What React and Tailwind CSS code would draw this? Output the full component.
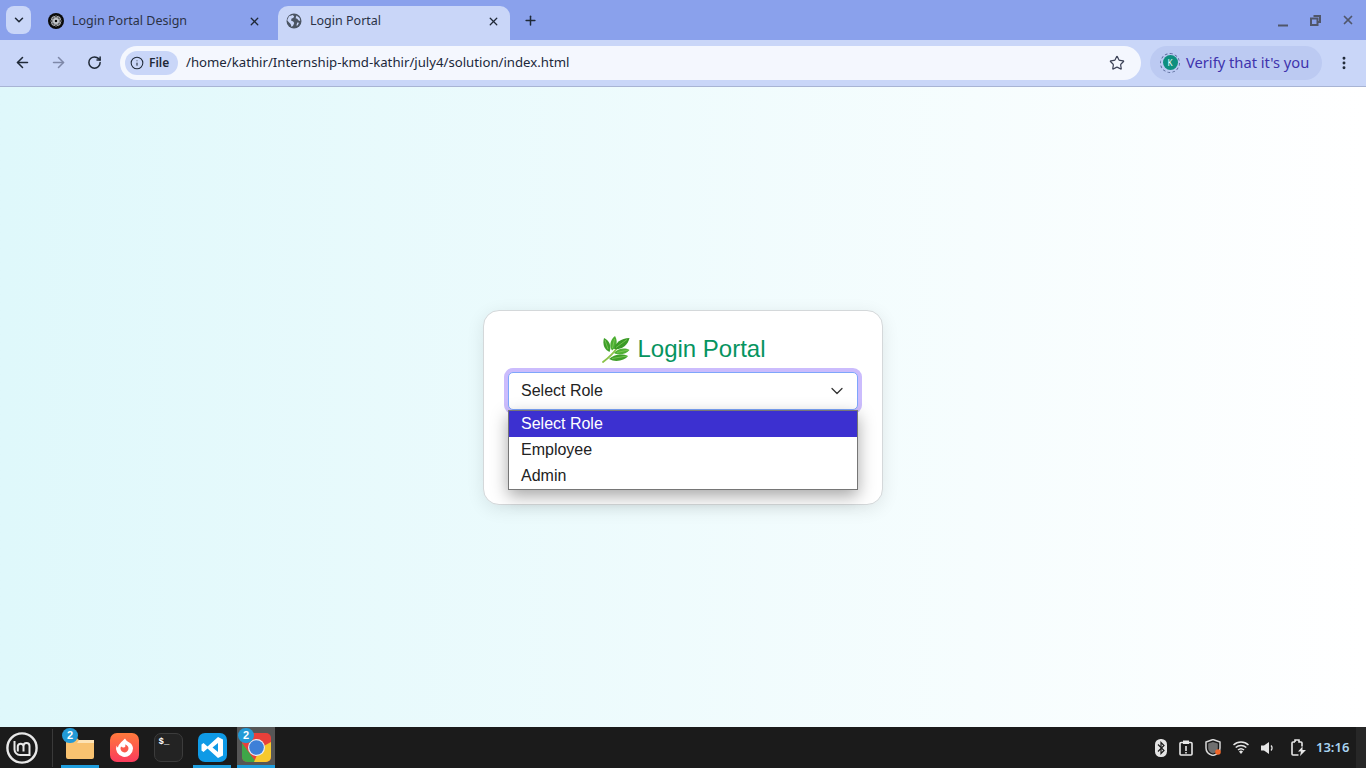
import React from "react";
import { ArrowLeft, ArrowRight, RotateCw, Star, X, Plus, ChevronDown, EllipsisVertical, Info } from "lucide-react";

const ui = "font-['Noto_Sans',sans-serif]";

function Globe() {
  return (
    <svg width="16" height="16" viewBox="0 0 16 16">
      <circle cx="8" cy="8" r="7.500" fill="#4b5563" />
      <path d="M3 3.200 6.800 2l1.400 1.400-1 1.600-1.600.4L5 7.600l2.200.8 1 1.600-1 2.600-1.600 1.400L4.600 11 2.600 9 1.200 7.200z" fill="#c9d6f8" />
      <path d="M10.500 2.600 13.600 5l.6 3-1.600-.6-1.400-1.600-1.600-.6z" fill="#c9d6f8" />
      <path d="m11.200 9.400 1.800.4-1.400 2.600-1.200.2z" fill="#c9d6f8" />
    </svg>
  );
}

function GptIcon() {
  return (
    <svg width="16" height="16" viewBox="0 0 16 16">
      <circle cx="8" cy="8" r="8" fill="#0a0a0a" />
      <g fill="none" stroke="#d8dbe0" strokeWidth="0.600">
        <ellipse cx="8" cy="8" rx="1.800" ry="5.500" />
        <ellipse cx="8" cy="8" rx="1.800" ry="5.500" transform="rotate(30 8 8)" />
        <ellipse cx="8" cy="8" rx="1.800" ry="5.500" transform="rotate(60 8 8)" />
        <ellipse cx="8" cy="8" rx="1.800" ry="5.500" transform="rotate(90 8 8)" />
        <ellipse cx="8" cy="8" rx="1.800" ry="5.500" transform="rotate(120 8 8)" />
        <ellipse cx="8" cy="8" rx="1.800" ry="5.500" transform="rotate(150 8 8)" />
      </g>
    </svg>
  );
}

function Leaf() {
  return (
    <svg width="30" height="28" viewBox="0 0 30 28" className="shrink-0">
      <path d="M3 27C7 24 13 19 17 13" stroke="#8bc34a" strokeWidth="1.800" fill="none" strokeLinecap="round" />
      <path d="M9.500 17C5 15 2 10 4 3c5 2 8 8 5.500 14z" fill="#3f9f2a" />
      <path d="M12 15.500C9 11 10 5 15 1c3 5 2 11-3 14.500z" fill="#4cae32" />
      <path d="M14 14C15 8 21 3 29.500 3 28 10 22 15 14 14z" fill="#3a9a26" />
      <path d="M14 18c3-4 10-6 15.500-3-3 4-10 6-15.500 3z" fill="#4fb035" />
      <path d="M9 24c4-4 12-6 19-3-3 4-12 7-19 3z" fill="#3f9f2a" />
      <path d="M8 14 5 5M12.500 13 14.500 4M16 12.500 27 4.500M17 17.500l11-2.500M12 23.500l15-2.500" stroke="#86d05e" strokeWidth=".7" fill="none" />
    </svg>
  );
}

function Badge() {
  return (
    <span className="absolute left-[1px] top-[1px] z-10 flex h-[15px] w-[16px] items-center justify-center rounded-full bg-[#229ad6] font-['Liberation_Sans',sans-serif] text-[11px] font-bold leading-none text-white">
      2
    </span>
  );
}

function Dock({ children, active, open, badge }) {
  return (
    <div className={`relative flex h-[41px] w-[38px] shrink-0 items-center justify-center pb-[1px] ${active ? "bg-[#565656]" : ""}`}>
      {badge && <Badge />}
      {children}
      {open && <span className="absolute bottom-0 left-0 h-[3px] w-full bg-[#1f9ede]" />}
    </div>
  );
}

function Taskbar() {
  return (
    <footer className="flex h-[41px] w-full shrink-0 items-center bg-[#1b1b1b]">
      <div className="flex w-[52px] justify-center">
        <svg width="34" height="34" viewBox="0 0 34 34" className="mr-[9px]">
          <circle cx="17" cy="17" r="14.600" fill="none" stroke="#e8e8e8" strokeWidth="2.400" />
          <path d="M9.500 10v8.500a5.500 5.500 0 0 0 5.500 5.500h9.500V15a3 3 0 0 0-6 0v5.500M12.800 20.500V15a2.900 2.900 0 0 1 5.700 0" fill="none" stroke="#e8e8e8" strokeWidth="2" />
        </svg>
      </div>
      <div className="h-[38px] w-px bg-[#3a3a3a]" />
      <div className="ml-[8px] flex">
        <Dock badge open>
          <svg width="30" height="26" viewBox="0 0 30 26">
            <path d="M1 5a2 2 0 0 1 2-2h8l3 3h13a2 2 0 0 1 2 2v15a2 2 0 0 1-2 2H3a2 2 0 0 1-2-2z" fill="#f8c270" />
            <path d="M14 6h15v3H12z" fill="#fde3b5" />
          </svg>
        </Dock>
        <div className="w-[6px]" />
        <Dock>
          <svg width="29" height="29" viewBox="0 0 29 29">
            <defs>
              <linearGradient id="ffg" x1="0" y1="0" x2="0" y2="1">
                <stop offset="0" stopColor="#ff7a3c" />
                <stop offset="1" stopColor="#fb3b5c" />
              </linearGradient>
            </defs>
            <rect width="29" height="29" rx="7" fill="url(#ffg)" />
            <path d="M15 5.500c1 1.500 1.500 2.500 3.500 3.500 2 1 4.500 3 4.500 6.500a8.500 8.500 0 1 1-16.500-3c.3 1 .8 1.700 1.500 2 .3-3 3.500-5.500 7-9z" fill="#fff" />
            <path d="M15 11.500c2 .5 3.500 2 3.500 3.800a4 4 0 1 1-7.500-1.800c1 1 2 1.200 3 1 1.500-.3 1.800-1.500 1-3z" fill="#fb5b4c" />
          </svg>
        </Dock>
        <div className="w-[6px]" />
        <Dock>
          <div className="flex h-[29px] w-[29px] items-start rounded-[7px] border border-[#3c3c3c] bg-[#232323] px-[4px] pt-[3px] font-['Liberation_Mono',monospace] text-[9px] font-bold leading-[11px] text-white">
            $_
          </div>
        </Dock>
        <div className="w-[6px]" />
        <Dock open>
          <svg width="29" height="29" viewBox="0 0 29 29">
            <rect width="29" height="29" rx="7" fill="#0f9ae6" />
            <path d="m20 4 5 2.500v16L20 25 9.500 15.500 5.500 19l-2-1.500V11.500l2-1.500 4 3.500zm0 6-5.500 4.500L20 19z" fill="#fff" />
          </svg>
        </Dock>
        <div className="w-[6px]" />
        <Dock active open badge>
          <svg width="29" height="29" viewBox="0 0 29 29">
            <rect width="29" height="29" rx="5" fill="#e9403a" />
            <path d="M0 10 14 29H5a5 5 0 0 1-5-5z" fill="#3fa648" />
            <path d="M29 9v15a5 5 0 0 1-5 5H12l6-14z" fill="#f7c92e" />
            <circle cx="14.500" cy="14.500" r="8.500" fill="#e8edf5" />
            <circle cx="14.500" cy="14.500" r="7.300" fill="#3d80d8" />
          </svg>
        </Dock>
      </div>
      <div className="ml-auto flex h-full items-center">
        <svg width="12" height="18" viewBox="0 0 12 18">
          <rect width="12" height="18" rx="5.500" fill="#e4e4e4" />
          <path d="m3 5.500 6 6-3 3v-11l3 3-6 6" fill="none" stroke="#1b1b1b" strokeWidth="1.200" />
        </svg>
        <svg width="14" height="16" viewBox="0 0 14 16" className="ml-[12px]">
          <rect x="1" y="2.500" width="12" height="12.500" rx="1" fill="none" stroke="#e8e8e8" strokeWidth="1.600" />
          <rect x="4" y="0.500" width="6" height="3.500" fill="#e8e8e8" />
          <path d="M7 6v5M7 12v1.500" stroke="#e8e8e8" strokeWidth="1.600" />
        </svg>
        <svg width="17" height="17" viewBox="0 0 17 17" className="ml-[12px]">
          <path d="M8 0.500 15 3v6c0 4-3 6.500-7 7.500C4 15.500 1 13 1 9V3z" fill="none" stroke="#d8d8d8" strokeWidth="1.500" />
          <path d="M8 3 12.800 4.600V9c0 3-2 4.600-4.800 5.600C5.200 13.600 3.200 12 3.200 9V4.600z" fill="#6f6f6f" />
          <circle cx="13" cy="13" r="2.800" fill="#f2672a" />
        </svg>
        <svg width="16" height="13" viewBox="0 0 16 13" className="ml-[11px]">
          <path d="M0.500 4a11 11 0 0 1 15 0M2.700 6.500a8 8 0 0 1 10.600 0M5 9a4.500 4.500 0 0 1 6 0" fill="none" stroke="#e4e4e4" strokeWidth="1.500" />
          <path d="m8 13-2-2.500a3 3 0 0 1 4 0z" fill="#e4e4e4" />
        </svg>
        <svg width="13" height="14" viewBox="0 0 13 14" className="ml-[12px]">
          <path d="M0 4.500h3L8 1v12L3 9.500H0z" fill="#e6e6e6" />
          <path d="M10 4.500a3.500 3.500 0 0 1 0 5" fill="none" stroke="#e6e6e6" strokeWidth="1.300" />
        </svg>
        <svg width="15" height="17" viewBox="0 0 15 17" className="ml-[17px]">
          <path d="M4 3V1h4v2h2a1 1 0 0 1 1 1v3.500M7.500 16H2a1 1 0 0 1-1-1V4a1 1 0 0 1 1-1h2" fill="none" stroke="#e8e8e8" strokeWidth="1.600" />
          <path d="m11.500 7.500-4.500 5h3L9 17l6-6h-3.500z" fill="#e8e8e8" />
        </svg>
        <span className="ml-[10px] w-[40px] font-['Noto_Sans',sans-serif] text-[13px] font-semibold leading-none text-[#a9d4f2]">13:16</span>
        <div className="h-full w-[10px] bg-[#272727]" />
      </div>
    </footer>
  );
}

function BrowserChrome() {
  return (
    <header className={`${ui} w-full shrink-0`}>
      <div className="flex h-[40px] items-end bg-[#8aa1ec]">
        <div className="mb-[6px] ml-[6px] flex h-[28px] w-[25px] items-center justify-center rounded-[8px] bg-[#c9d6f8]">
          <ChevronDown size={14} strokeWidth={2.600} color="#1f2937" />
        </div>
        <div className="ml-[17px] flex h-[34px] w-[224px] items-center pb-[4px] pr-[9px]">
          <GptIcon />
          <span className="ml-[8px] flex-1 text-[12.500px] leading-none text-[#2a3246]">Login Portal Design</span>
          <X size={13} strokeWidth={2.400} color="#1f2937" />
          <span className="w-[2px]" />
        </div>
        <div className="ml-[6px] flex h-[34px] w-[232px] items-center rounded-t-[10px] bg-[#c9d6f8] pb-[4px] pl-[8px] pr-[10px]">
          <Globe />
          <span className="ml-[8px] flex-1 text-[12.500px] leading-none text-[#2a3246]">Login Portal</span>
          <X size={13} strokeWidth={2.400} color="#1f2937" />
        </div>
        <div className="mb-[12px] ml-[13px]">
          <Plus size={15} strokeWidth={2.400} color="#1f2937" />
        </div>
        <div className="mb-[13px] ml-auto flex items-center">
          <svg width="12" height="12" viewBox="0 0 12 12" className="mt-[2px]">
            <path d="M1 10.500h10" fill="none" stroke="#50566a" strokeWidth="2" />
          </svg>
          <svg width="11" height="11" viewBox="0 0 11 11" className="ml-[21px]">
            <path d="M3.500 1h6.500v6H8M1 3.500h6.500v6.500H1z" fill="none" stroke="#50566a" strokeWidth="2" />
          </svg>
          <X size={14} strokeWidth={3} color="#50566a" className="ml-[20px] mr-[11px]" />
        </div>
      </div>
      <div className="flex h-[47px] items-center border-b border-[#a8b4d4] bg-[#c9d6f8] pb-[1px]">
        <ArrowLeft size={17} strokeWidth={2.200} color="#1f2937" className="ml-[14px]" />
        <ArrowRight size={17} strokeWidth={2.200} color="#7e88a8" className="ml-[19px]" />
        <RotateCw size={15} strokeWidth={2.400} color="#1f2937" className="ml-[20px]" />
        <div className="ml-[18px] flex h-[34px] w-[1021px] items-center rounded-full bg-[#f4f7fe] pl-[5px] pr-[16px]">
          <div className="flex h-[24px] w-[53px] items-center rounded-full bg-[#c9d6f8] pl-[5px]">
            <Info size={14} strokeWidth={1.800} color="#1f2937" />
            <span className="ml-[5px] text-[12px] font-semibold leading-none text-[#1f2937]">File</span>
          </div>
          <span className="ml-[8px] flex-1 pt-[1px] text-[13.200px] leading-none text-[#20273a]">/home/kathir/Internship-kmd-kathir/july4/solution/index.html</span>
          <Star size={16} strokeWidth={1.800} color="#3c4257" />
        </div>
        <div className="ml-[9px] flex h-[34px] w-[172px] items-center rounded-full bg-[#bccaf2] pl-[10px]">
          <span className="flex h-[20px] w-[20px] items-center justify-center rounded-full border border-dashed border-[#5a6a9a]">
            <span className="flex h-[15px] w-[15px] items-center justify-center rounded-full bg-[#0f8f7e] text-[8px] leading-none text-white">K</span>
          </span>
          <span className="ml-[6px] text-[14.700px] leading-none text-[#3f33ad]">Verify that it's you</span>
        </div>
        <EllipsisVertical size={16} strokeWidth={2.400} color="#1f2937" className="ml-[14px]" />
      </div>
    </header>
  );
}

export default function App() {
  return (
    <div className="flex h-[768px] w-[1366px] flex-col overflow-hidden">
      <BrowserChrome />
      <main className="flex flex-1 items-center justify-center bg-gradient-to-r from-[#dff8fb] to-[#ffffff] font-['Liberation_Sans',sans-serif]">
        <div className="mt-[1px] h-[195px] w-[400px] rounded-[16px] border border-[#d4d8da] bg-white px-[24px] pt-[22px] shadow-[0_4px_18px_rgba(0,0,0,0.09)]">
          <h1 className="flex h-[32px] items-center justify-center gap-[7px] text-[24px] font-normal leading-none text-[#06945f]">
            <Leaf />
            <span>Login Portal</span>
          </h1>
          <div className="relative mt-[7px]">
            <div className="flex h-[38px] items-center justify-between rounded-[5px] border border-[#7ea6fb] bg-white pl-[12px] pr-[10px] text-[16px] leading-none text-[#222] shadow-[0_0_0_4px_#cbbcfd]">
              <span>Select Role</span>
              <ChevronDown size={20} strokeWidth={1.500} color="#333" />
            </div>
            <ul className="absolute left-0 right-0 top-[38px] z-10 border border-[#767676] bg-white text-[16px] leading-none text-[#222] shadow-[0_6px_16px_rgba(0,0,0,0.35)]">
              <li className="flex h-[26px] items-center bg-[#3c30d0] pl-[12px] text-white">Select Role</li>
              <li className="flex h-[26px] items-center pl-[12px]">Employee</li>
              <li className="flex h-[26px] items-center pl-[12px]">Admin</li>
            </ul>
          </div>
        </div>
      </main>
      <Taskbar />
    </div>
  );
}
